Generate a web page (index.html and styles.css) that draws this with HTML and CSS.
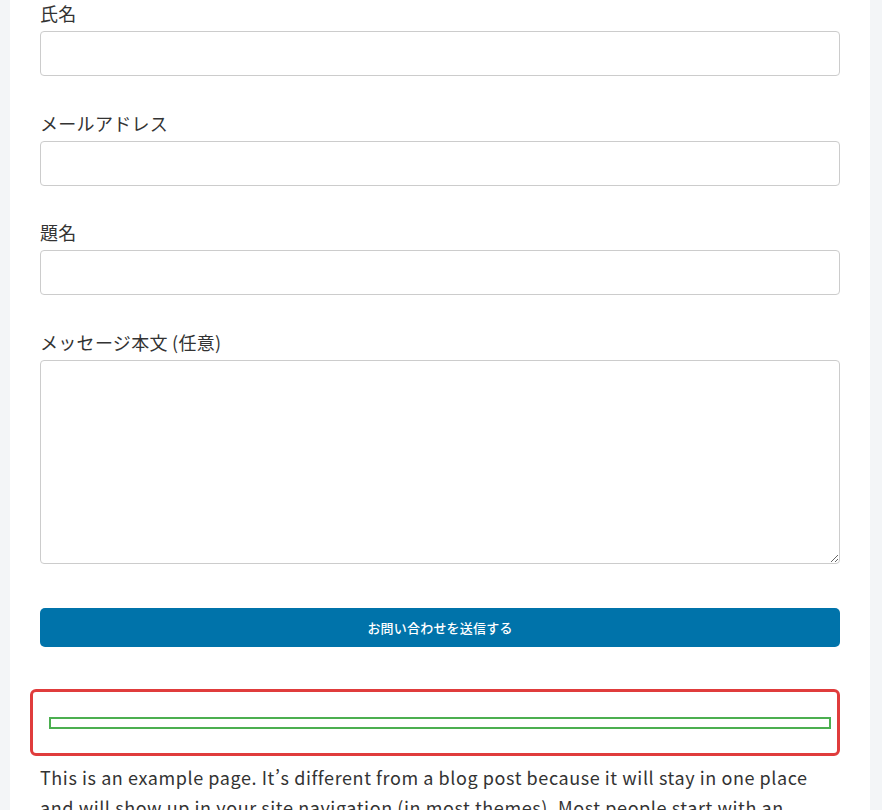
FILE: index.html
```html
<!DOCTYPE html>
<html lang="ja">
<head>
    <meta charset="UTF-8">
    <meta name="viewport" content="width=device-width, initial-scale=1.0">
    <title>お問い合わせ</title>
    <link rel="stylesheet" href="styles.css">
</head>
<body>
    <div class="page">
        <form class="contact-form">
            <div class="field">
                <label for="your-name">氏名</label>
                <input type="text" id="your-name">
            </div>
            <div class="field">
                <label for="your-email">メールアドレス</label>
                <input type="email" id="your-email">
            </div>
            <div class="field">
                <label for="your-subject">題名</label>
                <input type="text" id="your-subject">
            </div>
            <div class="field">
                <label for="your-message">メッセージ本文 (任意)</label>
                <textarea id="your-message"></textarea>
            </div>
            <button type="submit" class="submit">お問い合わせを送信する</button>
        </form>

        <div class="notice">
            <div class="notice-bar"></div>
        </div>

        <p class="content">This is an example page. It’s different from a blog post because it will stay in one place and will show up in your site navigation (in most themes). Most people start with an About page that introduces them to potential site visitors.</p>
    </div>
</body>
</html>
```

FILE: styles.css
```css
:root {
    --side-bg: #f3f5f7;
    --white: #ffffff;
    --text: #333;
    --border: #cccccc;
    --primary: #0073aa;
    --danger: #e03c3c;
    --success: #4caf50;
}

body {
    margin: 0;
    background-color: var(--side-bg);
    font-family: "Noto Sans CJK JP", "Noto Sans", sans-serif;
    color: var(--text);
    overflow: hidden;
}

.page {
    margin: 0 12px 0 10px;
    padding: 0 30px;
    background: var(--white);
    min-height: 810px;
}

.field {
    margin-bottom: 33.6px;
}

label {
    display: block;
    font-size: 18px;
    line-height: 27px;
    margin-bottom: 4px;
    letter-spacing: 0.3px;
}

input,
textarea {
    display: block;
    width: 100%;
    height: 45px;
    box-sizing: border-box;
    border: 1px solid var(--border);
    border-radius: 4px;
    background: var(--white);
    font-size: 16px;
    font-family: inherit;
    margin: 0;
}

textarea {
    height: 204px;
}

.submit {
    display: block;
    width: 100%;
    height: 39px;
    margin-top: 44px;
    border: none;
    border-radius: 5px;
    background-color: var(--primary);
    color: var(--white);
    font-family: inherit;
    font-size: 13px;
    font-weight: 500;
    letter-spacing: 0.2px;
    cursor: pointer;
}

.notice {
    margin-top: 42px;
    margin-left: -10px;
    border: 3px solid var(--danger);
    border-radius: 6px;
    padding: 25px 6px 24px 16px;
}

.notice-bar {
    height: 12px;
    box-sizing: border-box;
    border: 2px solid var(--success);
}

.content {
    margin: 6px 0 0;
    font-size: 18px;
    line-height: 30px;
    letter-spacing: 0.58px;
}
```
